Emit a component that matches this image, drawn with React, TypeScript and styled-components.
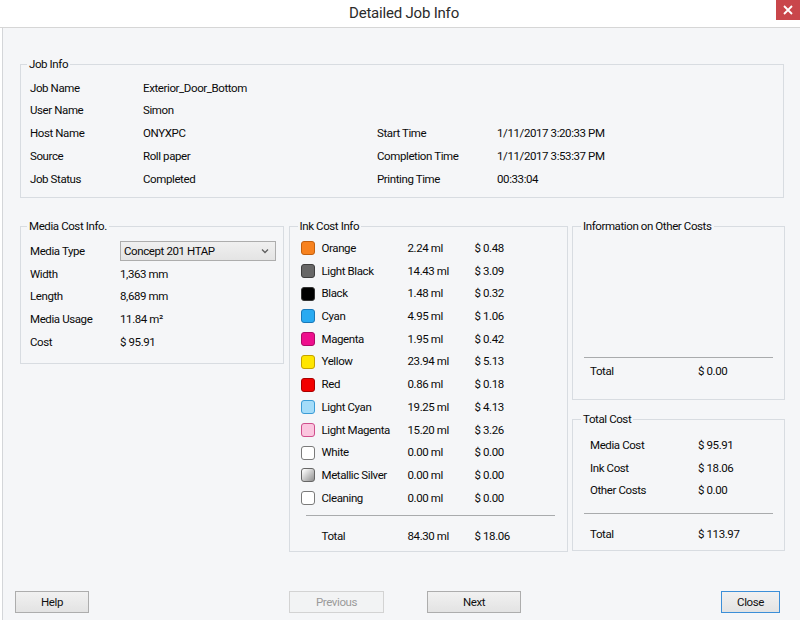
import React from 'react';
import styled, { createGlobalStyle } from 'styled-components';

const Global = createGlobalStyle`
  html, body { margin: 0; padding: 0; }
  body {
    width: 800px; height: 620px; overflow: hidden;
    font-family: Roboto, "Liberation Sans", Arial, sans-serif;
    font-size: 11.5px; letter-spacing: -0.4px; color: #0a0a0a;
  }
`;

const Window = styled.div`
  width: 800px; height: 620px;
  display: flex; flex-direction: column;
  background: #fff;
`;

const TitleBar = styled.div`
  flex-shrink: 0;
  height: 27px;
  border-bottom: 1px solid #d6d6d6;
  display: grid;
  grid-template-columns: 1fr auto 1fr;
  align-items: start;
`;

const Title = styled.div`
  grid-column: 2;
  font-size: 15px;
  letter-spacing: -0.2px;
  line-height: 26px;
  color: #2b2b2b;
  padding-left: 8px;
`;

const CloseX = styled.div`
  grid-column: 3;
  justify-self: end;
  width: 24px; height: 20px;
  background: #c9464b;
  display: flex; align-items: center; justify-content: center;
`;

const Body = styled.div`
  flex: 1;
  margin-left: 2px;
  border-left: 1px solid #d4d6d9;
  background: #f5f6f8;
  display: flex; flex-direction: column;
  padding: 29px 0 7px 0;
`;

const Content = styled.div`
  padding: 0 15px 0 17px;
  display: flex; flex-direction: column;
`;

const Group = styled.fieldset`
  margin: 0; min-width: 0;
  border: 1px solid #d8dce1;
  box-sizing: border-box;
`;

const Legend = styled.legend`
  margin-left: -3px;
  padding: 0 2px;
  line-height: 14px;
`;

const JobGroup = styled(Group)`
  margin-right: 1px;
  padding: 5.5px 8px 7px 9px;
`;

const JobGrid = styled.div`
  display: grid;
  grid-template-columns: 113px 234px 120px 1fr;
  grid-auto-rows: 22.75px;
  line-height: 22.75px;
`;

const Cell = styled.div`
  white-space: nowrap;
`;

const Middle = styled.div`
  margin-top: 21px;
  display: grid;
  grid-template-columns: 264px 279px 213px;
  justify-content: space-between;
  align-items: start;
`;

const MediaGroup = styled(Group)`
  padding: 6.6px 6px 9.6px 9px;
`;

const MediaGrid = styled.div`
  display: grid;
  grid-template-columns: 90px 1fr;
  grid-auto-rows: 22.75px;
  line-height: 22.75px;
  align-items: center;
`;

const Select = styled.div`
  width: 156px; height: 20px;
  box-sizing: border-box;
  border: 1px solid #adadad;
  background: linear-gradient(#f0f0f0, #e4e4e4);
  display: flex; align-items: center; justify-content: space-between;
  padding: 0 6px 0 3px;
  line-height: 18px;
`;

const InkGroup = styled(Group)`
  padding: 3.6px 10px 3.7px 11px;
`;

const InkGrid = styled.div`
  display: grid;
  grid-template-columns: 21px 86px 67px 1fr;
  grid-auto-rows: 22.73px;
  line-height: 22.73px;
  align-items: center;
`;

const Swatch = styled.div<{ $fill: string; $edge: string }>`
  width: 14px; height: 14px;
  box-sizing: border-box;
  border-radius: 3px;
  border: 1px solid ${p => p.$edge};
  background: ${p => p.$fill};
`;

const Rule = styled.div<{ $ml: number; $w: number; $mt: number; $mb: number }>`
  height: 1px;
  background: #a9abad;
  margin: ${p => p.$mt}px 0 ${p => p.$mb}px ${p => p.$ml}px;
  width: ${p => p.$w}px;
`;

const RightCol = styled.div`
  display: flex; flex-direction: column;
  gap: 12px;
`;

const OtherGroup = styled(Group)`
  padding: 0 10px 16px 11px;
`;

const Spacer = styled.div`
  height: 124px;
`;

const CostGrid = styled.div<{ $row: number }>`
  display: grid;
  grid-template-columns: 108px 1fr;
  grid-auto-rows: ${p => p.$row}px;
  line-height: ${p => p.$row}px;
  padding-left: 6px;
`;

const TotalGroup = styled(Group)`
  padding: 7.75px 10px 4.75px 11px;
`;

const Footer = styled.div`
  margin-top: auto;
  padding: 0 20px 0 12px;
  display: flex; justify-content: space-between; align-items: center;
`;

const Mid = styled.div`
  display: flex; gap: 43px;
`;

const Button = styled.button<{ $w: number; $focus?: boolean }>`
  width: ${p => p.$w}px; height: 22px;
  box-sizing: border-box;
  font-family: inherit; font-size: 11.5px; letter-spacing: -0.4px; color: #111;
  border: 1px solid ${p => (p.$focus ? '#3c8fd8' : '#adadad')};
  background: linear-gradient(#f1f1f1, #e3e3e3);
  padding: 0;
  &:disabled {
    color: #9a9a9a;
    border-color: #d3d3d3;
    background: #f2f3f4;
  }
`;

const jobRows: [string, string, string?, string?][] = [
  ['Job Name', 'Exterior_Door_Bottom'],
  ['User Name', 'Simon'],
  ['Host Name', 'ONYXPC', 'Start Time', '1/11/2017 3:20:33 PM'],
  ['Source', 'Roll paper', 'Completion Time', '1/11/2017 3:53:37 PM'],
  ['Job Status', 'Completed', 'Printing Time', '00:33:04'],
];

const inks = [
  { name: 'Orange', ml: '2.24 ml', cost: '$ 0.48', fill: '#f7821f', edge: '#c2600f' },
  { name: 'Light Black', ml: '14.43 ml', cost: '$ 3.09', fill: '#676767', edge: '#3e3e3e' },
  { name: 'Black', ml: '1.48 ml', cost: '$ 0.32', fill: '#000', edge: '#333' },
  { name: 'Cyan', ml: '4.95 ml', cost: '$ 1.06', fill: '#29aaf1', edge: '#1a78b8' },
  { name: 'Magenta', ml: '1.95 ml', cost: '$ 0.42', fill: '#ee0f8d', edge: '#ad0a66' },
  { name: 'Yellow', ml: '23.94 ml', cost: '$ 5.13', fill: '#ffe600', edge: '#c4a200' },
  { name: 'Red', ml: '0.86 ml', cost: '$ 0.18', fill: '#f20000', edge: '#a80000' },
  { name: 'Light Cyan', ml: '19.25 ml', cost: '$ 4.13', fill: '#a4dcf9', edge: '#3b9cd6' },
  { name: 'Light Magenta', ml: '15.20 ml', cost: '$ 3.26', fill: '#fbc6df', edge: '#cf4f8c' },
  { name: 'White', ml: '0.00 ml', cost: '$ 0.00', fill: '#fff', edge: '#7a7a7a' },
  { name: 'Metallic Silver', ml: '0.00 ml', cost: '$ 0.00', fill: 'linear-gradient(135deg,#fafafa 10%,#9a9a9a 90%)', edge: '#666' },
  { name: 'Cleaning', ml: '0.00 ml', cost: '$ 0.00', fill: '#fff', edge: '#7a7a7a' },
];

export default function App() {
  return (
    <Window>
      <Global />
      <TitleBar>
        <Title>Detailed Job Info</Title>
        <CloseX>
          <svg width="10" height="10" viewBox="0 0 10 10">
            <path d="M1 1L9 9M9 1L1 9" stroke="#fff" strokeWidth="1.8" />
          </svg>
        </CloseX>
      </TitleBar>
      <Body>
        <Content>
          <JobGroup>
            <Legend>Job Info</Legend>
            <JobGrid>
              {jobRows.map(r => (
                <React.Fragment key={r[0]}>
                  <Cell>{r[0]}</Cell>
                  <Cell>{r[1]}</Cell>
                  <Cell>{r[2] ?? ''}</Cell>
                  <Cell>{r[3] ?? ''}</Cell>
                </React.Fragment>
              ))}
            </JobGrid>
          </JobGroup>

          <Middle>
            <MediaGroup>
              <Legend>Media Cost Info.</Legend>
              <MediaGrid>
                <Cell>Media Type</Cell>
                <Select>
                  <span>Concept 201 HTAP</span>
                  <svg width="8" height="6" viewBox="0 0 8 6">
                    <path d="M1 1.5L4 4.5L7 1.5" stroke="#606060" strokeWidth="1.3" fill="none" />
                  </svg>
                </Select>
                <Cell>Width</Cell>
                <Cell>1,363 mm</Cell>
                <Cell>Length</Cell>
                <Cell>8,689 mm</Cell>
                <Cell>Media Usage</Cell>
                <Cell>11.84 m²</Cell>
                <Cell>Cost</Cell>
                <Cell>$ 95.91</Cell>
              </MediaGrid>
            </MediaGroup>

            <InkGroup>
              <Legend>Ink Cost Info</Legend>
              <InkGrid>
                {inks.map(i => (
                  <React.Fragment key={i.name}>
                    <Swatch $fill={i.fill} $edge={i.edge} />
                    <Cell>{i.name}</Cell>
                    <Cell>{i.ml}</Cell>
                    <Cell>{i.cost}</Cell>
                  </React.Fragment>
                ))}
              </InkGrid>
              <Rule $ml={5} $w={249} $mt={5.7} $mb={8.6} />
              <InkGrid>
                <span />
                <Cell>Total</Cell>
                <Cell>84.30 ml</Cell>
                <Cell>$ 18.06</Cell>
              </InkGrid>
            </InkGroup>

            <RightCol>
              <OtherGroup>
                <Legend>Information on Other Costs</Legend>
                <Spacer />
                <Rule $ml={0} $w={189} $mt={0} $mb={2} />
                <CostGrid $row={23}>
                  <Cell>Total</Cell>
                  <Cell>$ 0.00</Cell>
                </CostGrid>
              </OtherGroup>
              <TotalGroup>
                <Legend>Total Cost</Legend>
                <CostGrid $row={22.5}>
                  <Cell>Media Cost</Cell>
                  <Cell>$ 95.91</Cell>
                  <Cell>Ink Cost</Cell>
                  <Cell>$ 18.06</Cell>
                  <Cell>Other Costs</Cell>
                  <Cell>$ 0.00</Cell>
                </CostGrid>
                <Rule $ml={0} $w={189} $mt={11.75} $mb={8.75} />
                <CostGrid $row={22.5}>
                  <Cell>Total</Cell>
                  <Cell>$ 113.97</Cell>
                </CostGrid>
              </TotalGroup>
            </RightCol>
          </Middle>
        </Content>
        <Footer>
          <Button $w={74}>Help</Button>
          <Mid>
            <Button $w={95} disabled>Previous</Button>
            <Button $w={94}>Next</Button>
          </Mid>
          <Button $w={59} $focus>Close</Button>
        </Footer>
      </Body>
    </Window>
  );
}
